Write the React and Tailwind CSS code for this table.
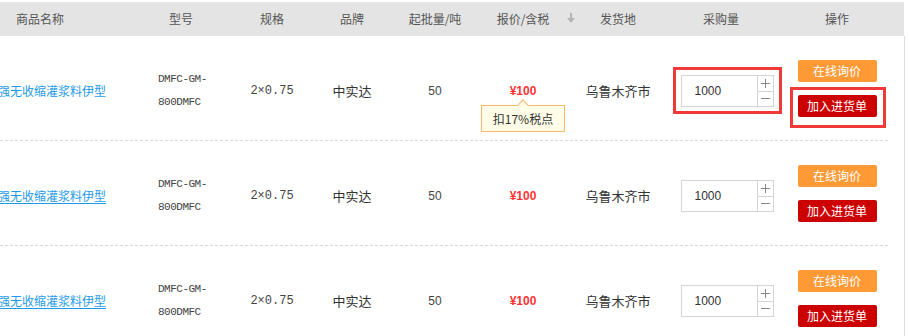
const cols = 'grid grid-cols-[130px_102px_80px_80px_86px_94px_92px_122px_102px]'

const rows = [
  { id: 1, underline: false, tip: true, mark: true },
  { id: 2, underline: true, tip: false, mark: false },
  { id: 3, underline: true, tip: false, mark: false },
]

const cjk = "font-['Noto_Sans_CJK_SC',sans-serif]"
const mono = "font-['Liberation_Mono','Noto_Sans_CJK_SC',monospace]"

function Header() {
  return (
    <div className={`mt-[2px] h-[34px] w-[904px] bg-[#e4e4e4] text-[12px] text-[#555] ${cjk}`}>
      <div className={`${cols} h-full items-center`}>
        <div className="pl-4">商品名称</div>
        <div className="text-center">型号</div>
        <div className="text-center">规格</div>
        <div className="text-center">品牌</div>
        <div className="text-center">起批量/吨</div>
        <div className="flex justify-center">
          <span className="relative -ml-1">
            报价/含税
            <svg className="absolute left-full top-[3px] ml-[18px]" width="8" height="10" viewBox="0 0 8 10">
              <path d="M3 0h2v5h3L4 10 0 5h3z" fill="#b5b5b5" />
            </svg>
          </span>
        </div>
        <div className="text-center">发货地</div>
        <div className="text-center -ml-2">采购量</div>
        <div className="text-center">操作</div>
      </div>
    </div>
  )
}

function Row({ row }) {
  return (
    <div className={`${cols} h-[105px] items-center border-b border-dashed border-[#d9d9d9] pt-[6px] text-[12px] text-[#333] ${cjk}`}>
      <div className="overflow-hidden whitespace-nowrap">
        <a className={`-ml-[14px] inline-block text-[#1e9ae8] ${row.underline ? 'underline underline-offset-2' : ''}`}>
          高强无收缩灌浆料伊型
        </a>
      </div>
      <div className={`pl-[28px] text-[11px] leading-[23px] tracking-[-0.5px] text-[#444] ${mono}`}>
        <div>DMFC-GM-</div>
        <div>800DMFC</div>
      </div>
      <div className={`text-center text-[12px] text-[#444] ${mono}`}>2×0.75</div>
      <div className="text-center text-[13px]">中实达</div>
      <div className="text-center font-['Liberation_Sans',sans-serif] text-[12px] text-[#444]">50</div>
      <div className="flex justify-center">
        <span className="relative -ml-1 font-['Liberation_Sans',sans-serif] text-[12px] font-bold leading-[16px] text-[#f33]">
          ¥100
          {row.tip && (
            <span className={`absolute left-1/2 top-[22px] flex h-[27px] w-[84px] -translate-x-1/2 items-center justify-center border border-[#f6b96c] bg-[#fffde8] text-[12px] font-normal text-[#333] ${cjk}`}>
              <span className="absolute -top-[5px] left-1/2 h-[8px] w-[8px] -translate-x-1/2 rotate-45 border-l border-t border-[#f6b96c] bg-[#fffde8]" />
              扣17%税点
            </span>
          )}
        </span>
      </div>
      <div className="text-center text-[13px]">乌鲁木齐市</div>
      <div className="flex justify-center pl-1">
        <div className="relative flex h-[32px] w-[93px] border border-[#d5d5d5] bg-white">
          {row.mark && <div className="absolute -bottom-[8px] -left-[9px] -right-[9px] -top-[9px] border-[3px] border-[#f03a3a]" />}
          <div className="flex flex-1 items-center pl-[13px] font-['Liberation_Sans',sans-serif] text-[12px] text-[#333]">1000</div>
          <div className="flex w-[16px] flex-col border-l border-[#d5d5d5] text-[#888]">
            <div className="flex flex-1 items-center justify-center border-b border-[#d5d5d5]">
              <svg width="9" height="9" viewBox="0 0 9 9"><path d="M4.5 0v9M0 4.5h9" stroke="#888" strokeWidth="1" /></svg>
            </div>
            <div className="flex flex-1 items-center justify-center">
              <svg width="9" height="9" viewBox="0 0 9 9"><path d="M0 4.5h9" stroke="#888" strokeWidth="1" /></svg>
            </div>
          </div>
        </div>
      </div>
      <div className="-mt-[6px] flex flex-col items-center gap-[13px]">
        <button className="h-[22px] w-[79px] rounded-[2px] bg-[#fe9a36] text-[12px] text-white">在线询价</button>
        <div className="relative">
          {row.mark && <div className="absolute -bottom-[11px] -left-[8px] -right-[9px] -top-[8px] border-[3px] border-[#f03a3a]" />}
          <button className="relative h-[22px] w-[79px] rounded-[2px] bg-[#cc0000] text-[12px] text-white">加入进货单</button>
        </div>
      </div>
    </div>
  )
}

export default function App() {
  return (
    <div className="h-[336px] w-[909px] overflow-hidden bg-white">
      <Header />
      <div className="flex w-[905px] border-r border-[#dcdcdc]">
        <div className="w-[888px]">
          {rows.map((r) => (
            <Row key={r.id} row={r} />
          ))}
        </div>
      </div>
    </div>
  )
}
